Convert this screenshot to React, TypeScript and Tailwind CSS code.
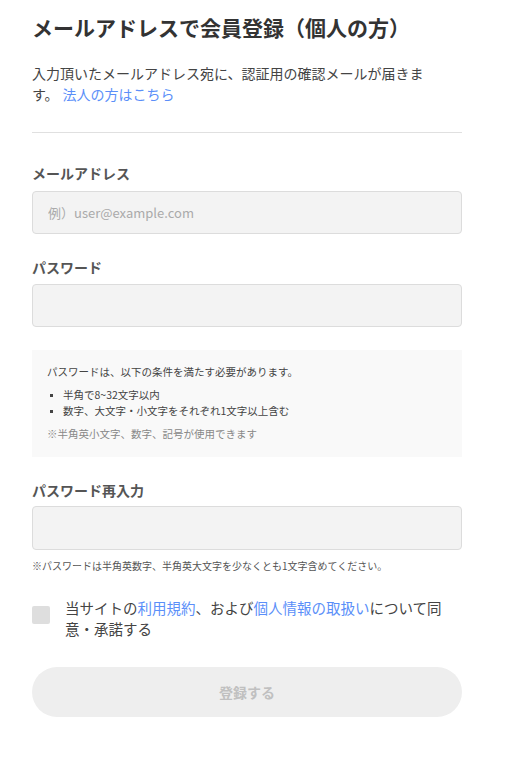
import { useState } from "react";

const App = () => {
  const [agreed, setAgreed] = useState(false);

  return (
    <div className="min-h-screen bg-white font-['Noto_Sans_CJK_JP','Noto_Sans',sans-serif] text-[#333]">
      <div className="w-[430px] ml-8 pt-[12px] pb-10">
        <h1 className="text-[21px] font-bold leading-[30px] text-[#333]">
          メールアドレスで会員登録（個人の方）
        </h1>
        <p className="mt-[21px] w-[412px] text-[14px] leading-[21px] text-[#444]">
          入力頂いたメールアドレス宛に、認証用の確認メールが届きます。
          <a href="#" className="ml-[4px] text-[#5b8ff9]">
            法人の方はこちら
          </a>
        </p>

        <hr className="mt-[27px] border-t border-[#e0e0e0]" />

        <div className="mt-[28px]">
          <label className="block text-[14px] font-bold leading-[24px] text-[#555]">
            メールアドレス
          </label>
          <input
            type="email"
            placeholder="例）user@example.com"
            className="mt-[6px] block h-[43px] w-full rounded-[4px] border border-[#dcdcdc] bg-[#f3f3f3] px-[15px] text-[13px] text-[#333] placeholder:text-[#aaa] outline-none"
          />
        </div>

        <div className="mt-[21px]">
          <label className="block text-[14px] font-bold leading-[24px] text-[#555]">
            パスワード
          </label>
          <input
            type="password"
            className="mt-[5px] block h-[43px] w-full rounded-[4px] border border-[#dcdcdc] bg-[#f3f3f3] px-[15px] text-[13px] outline-none"
          />
        </div>

        <div className="mt-[23px] bg-[#f9f9f9] px-[15px] pt-[14px] pb-[15px] text-[10.5px] leading-[16px] text-[#444]">
          <p>パスワードは、以下の条件を満たす必要があります。</p>
          <ul className="mt-[7px] pl-[3px]">
            <li className="flex items-center gap-[10px]">
              <span className="h-[3px] w-[3px] bg-[#444]" />
              半角で8~32文字以内
            </li>
            <li className="flex items-center gap-[10px]">
              <span className="h-[3px] w-[3px] bg-[#444]" />
              数字、大文字・小文字をそれぞれ1文字以上含む
            </li>
          </ul>
          <p className="mt-[7px] text-[#888]">※半角英小文字、数字、記号が使用できます</p>
        </div>

        <div className="mt-[21px]">
          <label className="block text-[14px] font-bold leading-[24px] text-[#555]">
            パスワード再入力
          </label>
          <input
            type="password"
            className="mt-[4px] block h-[44px] w-full rounded-[4px] border border-[#dcdcdc] bg-[#f3f3f3] px-[15px] text-[13px] outline-none"
          />
          <p className="mt-[8px] text-[10px] leading-[16px] text-[#555]">
            ※パスワードは半角英数字、半角英大文字を少なくとも1文字含めてください。
          </p>
        </div>

        <label className="mt-[23px] flex items-start gap-[15px]">
          <button
            type="button"
            onClick={() => setAgreed(!agreed)}
            className={`mt-[9px] h-[18px] w-[18px] shrink-0 rounded-[2px] ${agreed ? "bg-[#5b8ff9]" : "bg-[#dedede]"}`}
          />
          <span className="text-[14.5px] leading-[21px] text-[#444]">
            当サイトの<a href="#" className="text-[#5b8ff9]">利用規約</a>、および
            <a href="#" className="text-[#5b8ff9]">個人情報の取扱い</a>について同意・承諾する
          </span>
        </label>

        <button
          type="button"
          disabled
          className="mt-[28px] flex h-[50px] w-full items-center justify-center rounded-full bg-[#eeeeee] text-[14px] font-bold text-[#c0c0c0]"
        >
          登録する
        </button>
      </div>
    </div>
  );
};

export default App;
